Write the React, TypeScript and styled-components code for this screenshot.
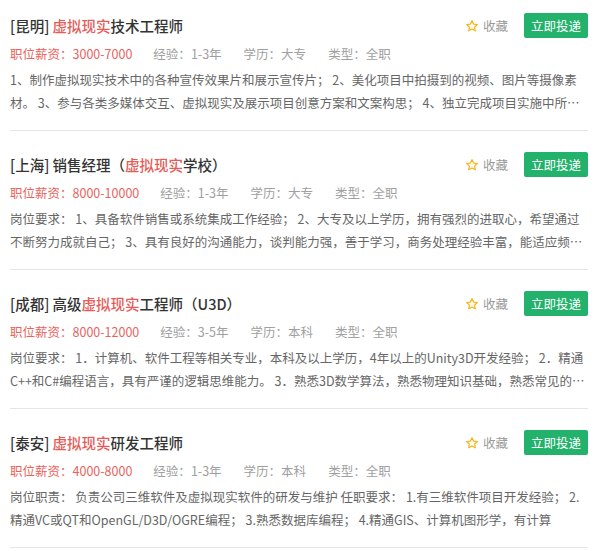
import styled, { createGlobalStyle } from "styled-components";

const GlobalStyle = createGlobalStyle`
  html, body {
    margin: 0;
    padding: 0;
    background: #fff;
  }
  body {
    font-family: "Microsoft YaHei", "Noto Sans CJK SC", sans-serif;
    overflow: hidden;
  }
`;

type Job = {
  city: string;
  before: string;
  highlight: string;
  after: string;
  salary: string;
  exp: string;
  edu: string;
  type: string;
  desc: string;
};

const jobs: Job[] = [
  {
    city: "[昆明]",
    before: "",
    highlight: "虚拟现实",
    after: "技术工程师",
    salary: "3000-7000",
    exp: "1-3年",
    edu: "大专",
    type: "全职",
    desc:
      "1、制作虚拟现实技术中的各种宣传效果片和展示宣传片； 2、美化项目中拍摄到的视频、图片等摄像素材。 3、参与各类多媒体交互、虚拟现实及展示项目创意方案和文案构思； 4、独立完成项目实施中所…",
  },
  {
    city: "[上海]",
    before: "销售经理（",
    highlight: "虚拟现实",
    after: "学校）",
    salary: "8000-10000",
    exp: "1-3年",
    edu: "大专",
    type: "全职",
    desc:
      "岗位要求： 1、具备软件销售或系统集成工作经验； 2、大专及以上学历，拥有强烈的进取心，希望通过不断努力成就自己； 3、具有良好的沟通能力，谈判能力强，善于学习，商务处理经验丰富，能适应频…",
  },
  {
    city: "[成都]",
    before: "高级",
    highlight: "虚拟现实",
    after: "工程师（U3D）",
    salary: "8000-12000",
    exp: "3-5年",
    edu: "本科",
    type: "全职",
    desc:
      "岗位要求： 1．计算机、软件工程等相关专业，本科及以上学历，4年以上的Unity3D开发经验； 2．精通C++和C#编程语言，具有严谨的逻辑思维能力。 3．熟悉3D数学算法，熟悉物理知识基础，熟悉常见的…",
  },
  {
    city: "[泰安]",
    before: "",
    highlight: "虚拟现实",
    after: "研发工程师",
    salary: "4000-8000",
    exp: "1-3年",
    edu: "本科",
    type: "全职",
    desc:
      "岗位职责： 负责公司三维软件及虚拟现实软件的研发与维护 任职要求： 1.有三维软件项目开发经验； 2.精通VC或QT和OpenGL/D3D/OGRE编程； 3.熟悉数据库编程； 4.精通GIS、计算机图形学，有计算",
  },
];

const StarIcon = () => (
  <svg width="14" height="14" viewBox="0 0 24 24">
    <path
      d="M12 2.8l2.8 5.9 6.4.8-4.7 4.4 1.2 6.4L12 17.2l-5.7 3.1 1.2-6.4-4.7-4.4 6.4-.8z"
      fill="#fffbe6"
      stroke="#f1b51c"
      strokeWidth="2"
      strokeLinejoin="round"
    />
  </svg>
);

export default function App() {
  return (
    <>
      <GlobalStyle />
      <JobList>
        {jobs.map((job) => (
          <JobCard key={job.city}>
            <CardHead>
              <Title>
                {job.city} {job.before}
                <Highlight>{job.highlight}</Highlight>
                {job.after}
              </Title>
              <Actions>
                <Favorite>
                  <StarIcon />
                  收藏
                </Favorite>
                <ApplyButton>立即投递</ApplyButton>
              </Actions>
            </CardHead>
            <MetaRow>
              <Salary>职位薪资：{job.salary}</Salary>
              <MetaItem>经验：{job.exp}</MetaItem>
              <MetaItem>学历：{job.edu}</MetaItem>
              <MetaItem>类型：{job.type}</MetaItem>
            </MetaRow>
            <Description>{job.desc}</Description>
          </JobCard>
        ))}
      </JobList>
    </>
  );
}

const JobList = styled.ul`
  list-style: none;
  margin: 0;
  padding: 0;
`;

const JobCard = styled.li`
  margin: 0 12px 0 10px;
  padding: 21px 0 16px;
  border-bottom: 1px solid #e6e6e6;

  &:first-child {
    padding-top: 13px;
  }
`;

const CardHead = styled.div`
  display: flex;
  align-items: center;
  justify-content: space-between;
  height: 25px;
`;

const Title = styled.h3`
  margin: 0;
  font-size: 14.5px;
  font-weight: 500;
  color: #333;
  white-space: pre;
`;

const Highlight = styled.span`
  color: #e75b57;
`;

const Actions = styled.div`
  display: flex;
  align-items: center;
`;

const Favorite = styled.span`
  display: flex;
  align-items: center;
  gap: 4px;
  font-size: 12.5px;
  color: #999;
  margin-right: 16px;
  cursor: pointer;
`;

const ApplyButton = styled.button`
  width: 64px;
  height: 25px;
  border: none;
  border-radius: 2px;
  background: #22b26b;
  color: #fff;
  font-family: inherit;
  font-size: 12.5px;
  padding: 0;
  cursor: pointer;
`;

const MetaRow = styled.div`
  display: flex;
  align-items: center;
  margin-top: 5px;
  height: 20px;
  font-size: 12.5px;
`;

const Salary = styled.span`
  color: #e9635d;
  margin-right: 21px;
`;

const MetaItem = styled.span`
  color: #a0a0a0;
  margin-right: 22px;
`;

const Description = styled.p`
  margin: 5px 0 0;
  font-size: 12.5px;
  line-height: 23px;
  color: #666;
`;
